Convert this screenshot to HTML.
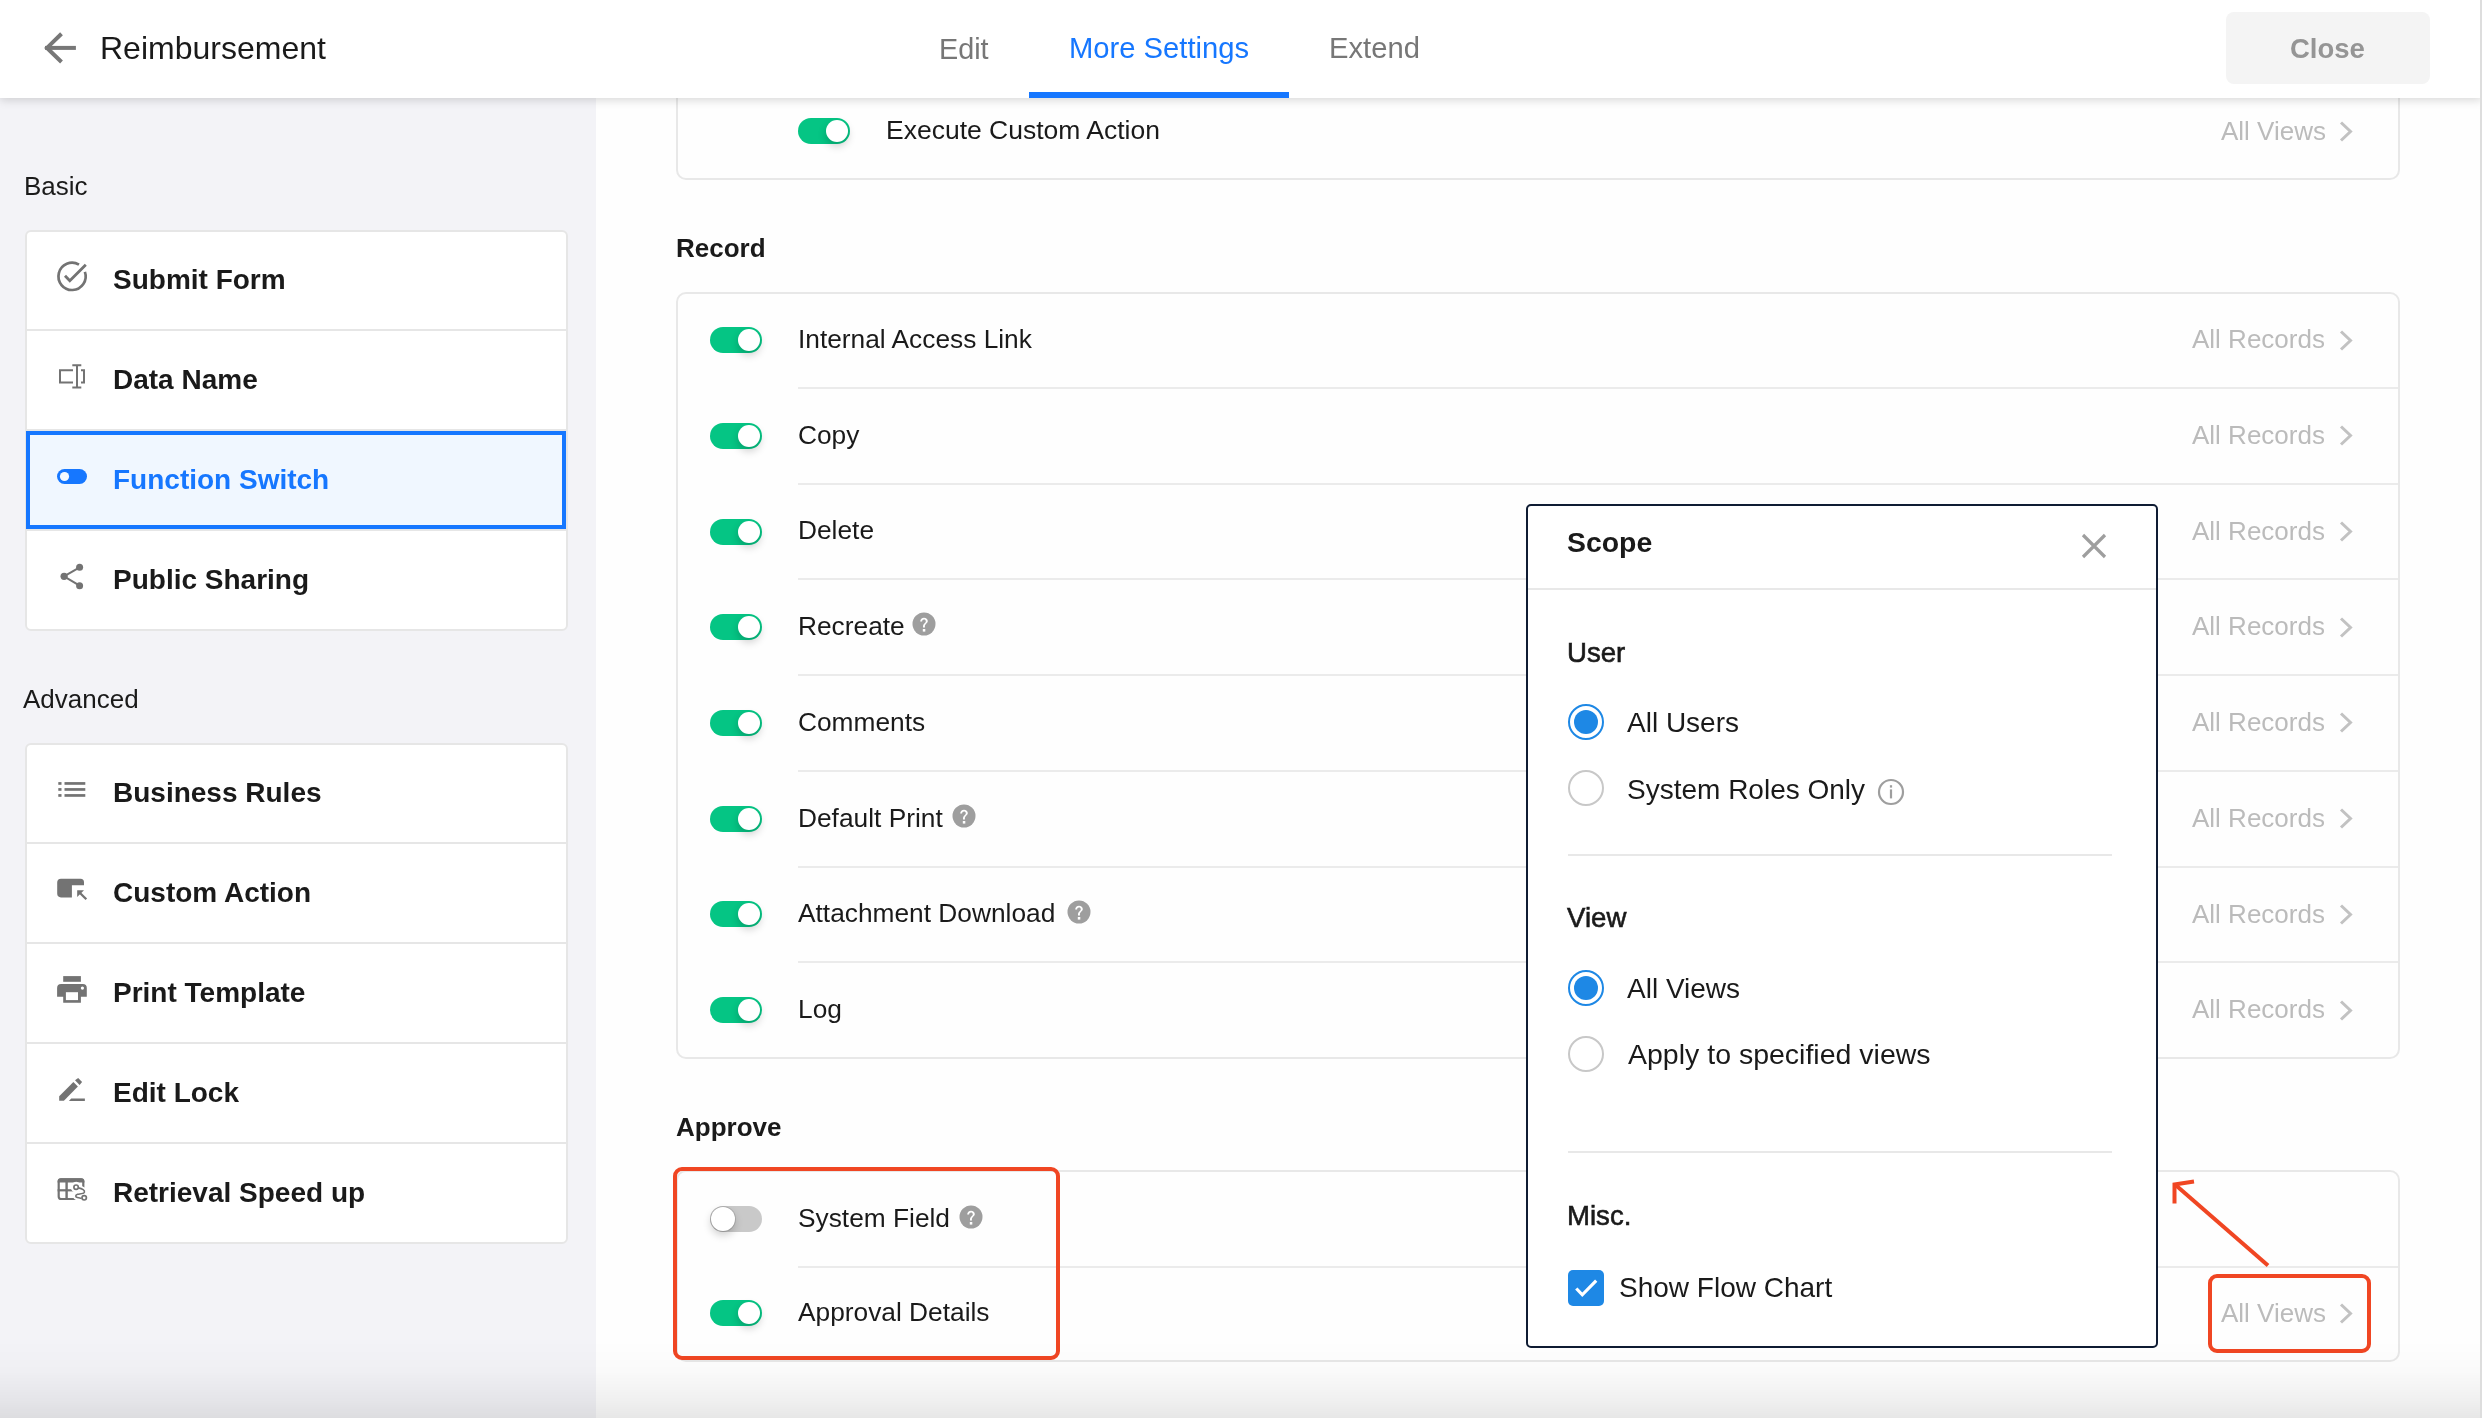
<!DOCTYPE html><html><head><meta charset="utf-8"><title>Reimbursement</title><style>

html,body{margin:0;padding:0;}
body{width:2482px;height:1418px;position:relative;overflow:hidden;background:#fefefe;font-family:"Liberation Sans", sans-serif;}
.a{position:absolute;box-sizing:border-box;}
.t{position:absolute;white-space:nowrap;-webkit-font-smoothing:antialiased;will-change:transform;}
.tog{width:52px;height:26px;border-radius:13px;}
.knob{position:absolute;top:2px;width:22px;height:22px;border-radius:50%;background:#fff;box-shadow:0 4px 9px rgba(0,0,0,0.2);}
.knob.off{top:1px;width:24px;height:24px;box-shadow:0 0 0 1px rgba(0,0,0,0.12),0 4px 9px rgba(0,0,0,0.2);}
.card{background:#fefefe;border:2px solid #e8e8e8;border-radius:10px;}
.sc{background:#fff;border:2px solid #e6e6e6;border-radius:6px;}
.div{background:#ebebeb;height:2px;}

</style></head><body>
<div class="a" style="left:0px;top:98px;width:596px;height:1320px;background:#f3f3f7"></div>
<div class="t" style="left:24.0px;top:172.7px;font-size:26px;line-height:26px;font-weight:400;color:#1a1a1a;">Basic</div>
<div class="a" style="left:25px;top:230px;width:543px;height:400px;"></div>
<div class="a sc" style="left:25px;top:230px;width:543px;height:401px"></div>
<div class="a" style="left:27px;top:329px;width:539px;height:2px;background:#e6e6e6"></div>
<div class="a" style="left:27px;top:429px;width:539px;height:2px;background:#e6e6e6"></div>
<div class="a" style="left:27px;top:529px;width:539px;height:2px;background:#e6e6e6"></div>
<div class="a" style="left:26px;top:431px;width:540px;height:98px;background:#f0f7ff;border:4px solid #1677ff"></div>
<div class="t" style="left:113.0px;top:266.1px;font-size:28px;line-height:28px;font-weight:700;color:#1a1a1a;">Submit Form</div>
<div class="t" style="left:113.0px;top:366.1px;font-size:28px;line-height:28px;font-weight:700;color:#1a1a1a;">Data Name</div>
<div class="t" style="left:113.0px;top:466.1px;font-size:28px;line-height:28px;font-weight:700;color:#1677ff;">Function Switch</div>
<div class="t" style="left:113.0px;top:566.1px;font-size:28px;line-height:28px;font-weight:700;color:#1a1a1a;">Public Sharing</div>
<div class="t" style="left:23.0px;top:685.8px;font-size:26px;line-height:26px;font-weight:400;color:#1a1a1a;">Advanced</div>
<div class="a sc" style="left:25px;top:743px;width:543px;height:501px"></div>
<div class="a" style="left:27px;top:842px;width:539px;height:2px;background:#e6e6e6"></div>
<div class="a" style="left:27px;top:942px;width:539px;height:2px;background:#e6e6e6"></div>
<div class="a" style="left:27px;top:1042px;width:539px;height:2px;background:#e6e6e6"></div>
<div class="a" style="left:27px;top:1142px;width:539px;height:2px;background:#e6e6e6"></div>
<div class="t" style="left:113.0px;top:779.3px;font-size:28px;line-height:28px;font-weight:700;color:#1a1a1a;">Business Rules</div>
<div class="t" style="left:113.0px;top:879.3px;font-size:28px;line-height:28px;font-weight:700;color:#1a1a1a;">Custom Action</div>
<div class="t" style="left:113.0px;top:979.3px;font-size:28px;line-height:28px;font-weight:700;color:#1a1a1a;">Print Template</div>
<div class="t" style="left:113.0px;top:1079.3px;font-size:28px;line-height:28px;font-weight:700;color:#1a1a1a;">Edit Lock</div>
<div class="t" style="left:113.0px;top:1179.3px;font-size:28px;line-height:28px;font-weight:700;color:#1a1a1a;">Retrieval Speed up</div>
<svg class="a" style="left:50px;top:255px;" width="44" height="44" viewBox="0 0 44 44"><path d="M34.9 16.9 A13.6 13.6 0 1 1 29.0 9.7" fill="none" stroke="#737373" stroke-width="2.7"/><polyline points="15,20.8 19.8,25.8 35.8,9.8" fill="none" stroke="#737373" stroke-width="2.8"/></svg>
<svg class="a" style="left:50px;top:355px;" width="44" height="44" viewBox="0 0 44 44"><path d="M23 15.3 H10 V27.6 H23" fill="none" stroke="#737373" stroke-width="2"/><path d="M31 15.3 H34 V27.6 H31" fill="none" stroke="#737373" stroke-width="2"/><path d="M27 10 V33 M22.3 10.3 H31.3 M22.3 32.5 H31.3" fill="none" stroke="#737373" stroke-width="2"/></svg>
<svg class="a" style="left:50px;top:455px;" width="44" height="44" viewBox="0 0 44 44"><rect x="7" y="14" width="30" height="15" rx="7.5" fill="#1677ff"/><circle cx="14.5" cy="21.5" r="4.6" fill="#f4f9ff"/></svg>
<svg class="a" style="left:50px;top:555px;" width="44" height="44" viewBox="0 0 44 44"><line x1="14" y1="21.3" x2="29.6" y2="12.3" stroke="#737373" stroke-width="2"/><line x1="14" y1="21.3" x2="29.6" y2="30.7" stroke="#737373" stroke-width="2"/><circle cx="29.6" cy="12.3" r="3.5" fill="#737373"/><circle cx="14.1" cy="21.3" r="3.6" fill="#737373"/><circle cx="29.6" cy="30.7" r="3.5" fill="#737373"/></svg>
<svg class="a" style="left:50px;top:768px;" width="44" height="44" viewBox="0 0 44 44"><g fill="#737373"><rect x="8.3" y="14.1" width="3.2" height="2.7"/><rect x="8.3" y="20.1" width="3.2" height="2.7"/><rect x="8.3" y="26.1" width="3.2" height="2.7"/><rect x="14.5" y="14.1" width="20.8" height="2.7"/><rect x="14.5" y="20.1" width="20.8" height="2.7"/><rect x="14.5" y="26.1" width="20.8" height="2.7"/></g></svg>
<svg class="a" style="left:50px;top:868px;" width="44" height="44" viewBox="0 0 44 44"><path d="M11 10.8 H30.5 A3.5 3.5 0 0 1 34 14.3 V17.3 H21.9 V29.4 H11 A3.8 3.8 0 0 1 7.2 25.6 V14.6 A3.8 3.8 0 0 1 11 10.8 Z" fill="#737373"/><path d="M27.2 22.2 H34 L27.2 29 Z" fill="#737373"/><line x1="29.5" y1="24.5" x2="36.3" y2="31.3" stroke="#737373" stroke-width="2.3"/></svg>
<svg class="a" style="left:50px;top:968px;" width="44" height="44" viewBox="0 0 44 44"><rect x="13.2" y="8.1" width="17.7" height="5.7" fill="#737373"/><path d="M11.1 15.9 H32.8 A4 4 0 0 1 36.8 19.9 V28.7 H30.9 V34.7 H13.2 V28.7 H7.1 V19.9 A4 4 0 0 1 11.1 15.9 Z" fill="#737373"/><rect x="15.9" y="24.2" width="12.1" height="7.9" fill="#fff"/><circle cx="32.4" cy="20.1" r="1.6" fill="#fff"/></svg>
<svg class="a" style="left:50px;top:1068px;" width="44" height="44" viewBox="0 0 44 44"><path d="M9.2 28.2 L23.4 14.1 L27.9 18.5 L13.9 32.8 H9.2 Z" fill="#737373"/><path d="M25 12.3 L28.2 10 L32.1 14.1 L29.6 17.1 Z" fill="#737373"/><path d="M21.2 30.5 H34.9 V33 H18.9 Z" fill="#737373"/></svg>
<svg class="a" style="left:50px;top:1168px;" width="44" height="44" viewBox="0 0 44 44"><rect x="8.7" y="11.3" width="24.6" height="19.7" rx="2.6" fill="none" stroke="#737373" stroke-width="2.2"/><path d="M10.6 10.2 H31.4 A3 3 0 0 1 34.4 13.2 V14.6 H7.6 V13.2 A3 3 0 0 1 10.6 10.2 Z" fill="#737373"/><rect x="15.4" y="14" width="2.4" height="18" fill="#737373"/><rect x="7.6" y="21.2" width="26.8" height="2.2" fill="#737373"/><path d="M28.3 19.9 C32.5 20.8 35 22.3 34.4 24.3 C33.8 26 29.6 25.8 27.6 26.3 C25.2 27 25.2 28.9 27.4 29.6 C28.6 30 30 30.1 31.6 30.3" fill="none" stroke="#fff" stroke-width="5.5"/><circle cx="26.1" cy="19.2" r="5.4" fill="#fff"/><circle cx="34.2" cy="29.8" r="5" fill="#fff"/><path d="M28.3 19.9 C32.5 20.8 35 22.3 34.4 24.3 C33.8 26 29.6 25.8 27.6 26.3 C25.2 27 25.2 28.9 27.4 29.6 C28.6 30 30 30.1 31.6 30.3" fill="none" stroke="#737373" stroke-width="1.6"/><circle cx="26.1" cy="19.2" r="2.2" fill="none" stroke="#737373" stroke-width="1.7"/><circle cx="34.2" cy="29.8" r="2.2" fill="none" stroke="#737373" stroke-width="1.7"/></svg>
<div class="a card" style="left:676px;top:40px;width:1724px;height:140px"></div>
<div class="a tog" style="left:798px;top:118px;background:#05c584"><div class="knob" style="left:28px"></div></div>
<div class="t" style="left:886.0px;top:117.3px;font-size:26.5px;line-height:26.5px;font-weight:400;color:#1a1a1a;">Execute Custom Action</div>
<div class="t" style="left:2221.0px;top:118.0px;font-size:26px;line-height:26px;font-weight:400;color:#bbbbbb;">All Views</div>
<svg class="a" style="left:2339px;top:120.5px;" width="14" height="21" viewBox="0 0 14 21"><polyline points="2,1.5 11.5,10.5 2,19.5" fill="none" stroke="#c2c2c2" stroke-width="3"/></svg>
<div class="t" style="left:676.0px;top:235.0px;font-size:26px;line-height:26px;font-weight:700;color:#1a1a1a;">Record</div>
<div class="a card" style="left:676px;top:292px;width:1724px;height:767px"></div>
<div class="a tog" style="left:710px;top:327px;background:#05c584"><div class="knob" style="left:28px"></div></div>
<div class="t" style="left:798.0px;top:325.9px;font-size:26.3px;line-height:26.3px;font-weight:400;color:#1a1a1a;">Internal Access Link</div>
<div class="t" style="left:2192.0px;top:326.2px;font-size:26px;line-height:26px;font-weight:400;color:#bbbbbb;">All Records</div>
<svg class="a" style="left:2339px;top:330px;" width="14" height="21" viewBox="0 0 14 21"><polyline points="2,1.5 11.5,10.5 2,19.5" fill="none" stroke="#c2c2c2" stroke-width="3"/></svg>
<div class="a tog" style="left:710px;top:423px;background:#05c584"><div class="knob" style="left:28px"></div></div>
<div class="t" style="left:798.0px;top:421.7px;font-size:26.3px;line-height:26.3px;font-weight:400;color:#1a1a1a;">Copy</div>
<div class="t" style="left:2192.0px;top:421.9px;font-size:26px;line-height:26px;font-weight:400;color:#bbbbbb;">All Records</div>
<svg class="a" style="left:2339px;top:425px;" width="14" height="21" viewBox="0 0 14 21"><polyline points="2,1.5 11.5,10.5 2,19.5" fill="none" stroke="#c2c2c2" stroke-width="3"/></svg>
<div class="a" style="left:798px;top:387px;width:1600px;height:2px;background:#ebebeb"></div>
<div class="a tog" style="left:710px;top:519px;background:#05c584"><div class="knob" style="left:28px"></div></div>
<div class="t" style="left:798.0px;top:517.4px;font-size:26.3px;line-height:26.3px;font-weight:400;color:#1a1a1a;">Delete</div>
<div class="t" style="left:2192.0px;top:517.7px;font-size:26px;line-height:26px;font-weight:400;color:#bbbbbb;">All Records</div>
<svg class="a" style="left:2339px;top:521px;" width="14" height="21" viewBox="0 0 14 21"><polyline points="2,1.5 11.5,10.5 2,19.5" fill="none" stroke="#c2c2c2" stroke-width="3"/></svg>
<div class="a" style="left:798px;top:483px;width:1600px;height:2px;background:#ebebeb"></div>
<div class="a tog" style="left:710px;top:614px;background:#05c584"><div class="knob" style="left:28px"></div></div>
<div class="t" style="left:798.0px;top:613.2px;font-size:26.3px;line-height:26.3px;font-weight:400;color:#1a1a1a;">Recreate</div>
<div class="t" style="left:2192.0px;top:613.4px;font-size:26px;line-height:26px;font-weight:400;color:#bbbbbb;">All Records</div>
<svg class="a" style="left:2339px;top:617px;" width="14" height="21" viewBox="0 0 14 21"><polyline points="2,1.5 11.5,10.5 2,19.5" fill="none" stroke="#c2c2c2" stroke-width="3"/></svg>
<svg class="a" style="left:912px;top:612.25px;" width="24" height="24" viewBox="0 0 24 24"><circle cx="12" cy="12" r="11.5" fill="#9e9e9e"/><path d="M8.2 9.6 C8.2 7.2 10 5.7 12 5.7 C14.1 5.7 15.8 7.1 15.8 9.1 C15.8 11.3 12.9 12 12.9 14.6 L12.9 15.6 L11 15.6 L11 14.4 C11 11.6 13.8 11 13.8 9.2 C13.8 8.2 13 7.5 12 7.5 C10.9 7.5 10.1 8.3 10.1 9.6 Z" fill="#fff"/><rect x="10.8" y="17" width="2.5" height="2.6" fill="#fff"/></svg>
<div class="a" style="left:798px;top:578px;width:1600px;height:2px;background:#ebebeb"></div>
<div class="a tog" style="left:710px;top:710px;background:#05c584"><div class="knob" style="left:28px"></div></div>
<div class="t" style="left:798.0px;top:708.9px;font-size:26.3px;line-height:26.3px;font-weight:400;color:#1a1a1a;">Comments</div>
<div class="t" style="left:2192.0px;top:709.2px;font-size:26px;line-height:26px;font-weight:400;color:#bbbbbb;">All Records</div>
<svg class="a" style="left:2339px;top:712px;" width="14" height="21" viewBox="0 0 14 21"><polyline points="2,1.5 11.5,10.5 2,19.5" fill="none" stroke="#c2c2c2" stroke-width="3"/></svg>
<div class="a" style="left:798px;top:674px;width:1600px;height:2px;background:#ebebeb"></div>
<div class="a tog" style="left:710px;top:806px;background:#05c584"><div class="knob" style="left:28px"></div></div>
<div class="t" style="left:798.0px;top:804.7px;font-size:26.3px;line-height:26.3px;font-weight:400;color:#1a1a1a;">Default Print</div>
<div class="t" style="left:2192.0px;top:804.9px;font-size:26px;line-height:26px;font-weight:400;color:#bbbbbb;">All Records</div>
<svg class="a" style="left:2339px;top:808px;" width="14" height="21" viewBox="0 0 14 21"><polyline points="2,1.5 11.5,10.5 2,19.5" fill="none" stroke="#c2c2c2" stroke-width="3"/></svg>
<svg class="a" style="left:951.5px;top:803.75px;" width="24" height="24" viewBox="0 0 24 24"><circle cx="12" cy="12" r="11.5" fill="#9e9e9e"/><path d="M8.2 9.6 C8.2 7.2 10 5.7 12 5.7 C14.1 5.7 15.8 7.1 15.8 9.1 C15.8 11.3 12.9 12 12.9 14.6 L12.9 15.6 L11 15.6 L11 14.4 C11 11.6 13.8 11 13.8 9.2 C13.8 8.2 13 7.5 12 7.5 C10.9 7.5 10.1 8.3 10.1 9.6 Z" fill="#fff"/><rect x="10.8" y="17" width="2.5" height="2.6" fill="#fff"/></svg>
<div class="a" style="left:798px;top:770px;width:1600px;height:2px;background:#ebebeb"></div>
<div class="a tog" style="left:710px;top:901px;background:#05c584"><div class="knob" style="left:28px"></div></div>
<div class="t" style="left:798.0px;top:900.4px;font-size:26.3px;line-height:26.3px;font-weight:400;color:#1a1a1a;">Attachment Download</div>
<div class="t" style="left:2192.0px;top:900.7px;font-size:26px;line-height:26px;font-weight:400;color:#bbbbbb;">All Records</div>
<svg class="a" style="left:2339px;top:904px;" width="14" height="21" viewBox="0 0 14 21"><polyline points="2,1.5 11.5,10.5 2,19.5" fill="none" stroke="#c2c2c2" stroke-width="3"/></svg>
<svg class="a" style="left:1066.9px;top:899.5px;" width="24" height="24" viewBox="0 0 24 24"><circle cx="12" cy="12" r="11.5" fill="#9e9e9e"/><path d="M8.2 9.6 C8.2 7.2 10 5.7 12 5.7 C14.1 5.7 15.8 7.1 15.8 9.1 C15.8 11.3 12.9 12 12.9 14.6 L12.9 15.6 L11 15.6 L11 14.4 C11 11.6 13.8 11 13.8 9.2 C13.8 8.2 13 7.5 12 7.5 C10.9 7.5 10.1 8.3 10.1 9.6 Z" fill="#fff"/><rect x="10.8" y="17" width="2.5" height="2.6" fill="#fff"/></svg>
<div class="a" style="left:798px;top:866px;width:1600px;height:2px;background:#ebebeb"></div>
<div class="a tog" style="left:710px;top:997px;background:#05c584"><div class="knob" style="left:28px"></div></div>
<div class="t" style="left:798.0px;top:996.2px;font-size:26.3px;line-height:26.3px;font-weight:400;color:#1a1a1a;">Log</div>
<div class="t" style="left:2192.0px;top:996.4px;font-size:26px;line-height:26px;font-weight:400;color:#bbbbbb;">All Records</div>
<svg class="a" style="left:2339px;top:1000px;" width="14" height="21" viewBox="0 0 14 21"><polyline points="2,1.5 11.5,10.5 2,19.5" fill="none" stroke="#c2c2c2" stroke-width="3"/></svg>
<div class="a" style="left:798px;top:961px;width:1600px;height:2px;background:#ebebeb"></div>
<div class="t" style="left:676.0px;top:1114.0px;font-size:26px;line-height:26px;font-weight:700;color:#1a1a1a;">Approve</div>
<div class="a card" style="left:676px;top:1170px;width:1724px;height:192px"></div>
<div class="a tog" style="left:710px;top:1206px;background:#c9c9c9"><div class="knob off" style="left:1px"></div></div>
<div class="t" style="left:798.0px;top:1204.9px;font-size:26.3px;line-height:26.3px;font-weight:400;color:#1a1a1a;">System Field</div>
<svg class="a" style="left:958.5px;top:1205px;" width="24" height="24" viewBox="0 0 24 24"><circle cx="12" cy="12" r="11.5" fill="#9e9e9e"/><path d="M8.2 9.6 C8.2 7.2 10 5.7 12 5.7 C14.1 5.7 15.8 7.1 15.8 9.1 C15.8 11.3 12.9 12 12.9 14.6 L12.9 15.6 L11 15.6 L11 14.4 C11 11.6 13.8 11 13.8 9.2 C13.8 8.2 13 7.5 12 7.5 C10.9 7.5 10.1 8.3 10.1 9.6 Z" fill="#fff"/><rect x="10.8" y="17" width="2.5" height="2.6" fill="#fff"/></svg>
<div class="a" style="left:798px;top:1266px;width:1600px;height:2px;background:#ebebeb"></div>
<div class="a tog" style="left:710px;top:1300px;background:#05c584"><div class="knob" style="left:28px"></div></div>
<div class="t" style="left:798.0px;top:1299.2px;font-size:26.3px;line-height:26.3px;font-weight:400;color:#1a1a1a;">Approval Details</div>
<div class="t" style="left:2221.0px;top:1299.7px;font-size:26px;line-height:26px;font-weight:400;color:#bbbbbb;">All Views</div>
<svg class="a" style="left:2339px;top:1302.5px;" width="14" height="21" viewBox="0 0 14 21"><polyline points="2,1.5 11.5,10.5 2,19.5" fill="none" stroke="#c2c2c2" stroke-width="3"/></svg>
<div class="a" style="left:673px;top:1167px;width:387px;height:193px;border:4px solid #f04623;border-radius:9px"></div>
<div class="a" style="left:2208px;top:1274px;width:163px;height:79px;border:4px solid #f04623;border-radius:9px"></div>
<svg class="a" style="left:2160px;top:1170px;" width="120" height="110" viewBox="0 0 120 110"><line x1="108" y1="95.5" x2="15" y2="14.5" stroke="#f04623" stroke-width="4"/><polyline points="34,11.5 14.5,14.5 14.5,33.5" fill="none" stroke="#f04623" stroke-width="4"/></svg>
<div class="a" style="left:1526px;top:504px;width:632px;height:844px;background:#fff;border:2px solid #0f1c33;border-radius:5px"></div>
<div class="t" style="left:1567.3px;top:528.0px;font-size:28.4px;line-height:28.4px;font-weight:700;color:#1a1a1a;">Scope</div>
<svg class="a" style="left:2080px;top:532px;" width="28" height="28" viewBox="0 0 28 28"><path d="M3 3 L25 25 M25 3 L3 25" stroke="#9e9e9e" stroke-width="3.2"/></svg>
<div class="a" style="left:1528px;top:588px;width:628px;height:2px;background:#e8e8e8"></div>
<div class="t" style="left:1567.0px;top:638.6px;font-size:27.6px;line-height:27.6px;font-weight:400;color:#1a1a1a;-webkit-text-stroke:0.6px #1a1a1a">User</div>
<div class="a" style="left:1568px;top:704px;width:36px;height:36px;border-radius:50%;border:2px solid #1e88e5;background:#fff"><div class="a" style="left:4px;top:4px;width:24px;height:24px;border-radius:50%;background:#1e88e5"></div></div>
<div class="t" style="left:1627.0px;top:709.1px;font-size:28px;line-height:28px;font-weight:400;color:#1a1a1a;">All Users</div>
<div class="a" style="left:1568px;top:770px;width:36px;height:36px;border-radius:50%;border:2px solid #c8c8c8;background:#fff"></div>
<div class="t" style="left:1627.0px;top:776.3px;font-size:28px;line-height:28px;font-weight:400;color:#1a1a1a;">System Roles Only</div>
<svg class="a" style="left:1877px;top:778px;" width="28" height="28" viewBox="0 0 28 28"><circle cx="14" cy="14" r="12" fill="none" stroke="#9e9e9e" stroke-width="2.2"/><rect x="12.9" y="7.2" width="2.2" height="2.4" fill="#9e9e9e"/><rect x="12.9" y="11.4" width="2.2" height="9" fill="#9e9e9e"/></svg>
<div class="a" style="left:1568px;top:854px;width:544px;height:2px;background:#e8e8e8"></div>
<div class="t" style="left:1567.0px;top:904.1px;font-size:27.6px;line-height:27.6px;font-weight:400;color:#1a1a1a;-webkit-text-stroke:0.6px #1a1a1a">View</div>
<div class="a" style="left:1568px;top:970px;width:36px;height:36px;border-radius:50%;border:2px solid #1e88e5;background:#fff"><div class="a" style="left:4px;top:4px;width:24px;height:24px;border-radius:50%;background:#1e88e5"></div></div>
<div class="t" style="left:1627.0px;top:975.2px;font-size:28px;line-height:28px;font-weight:400;color:#1a1a1a;">All Views</div>
<div class="a" style="left:1568px;top:1036px;width:36px;height:36px;border-radius:50%;border:2px solid #c8c8c8;background:#fff"></div>
<div class="t" style="left:1627.5px;top:1040.4px;font-size:28.5px;line-height:28.5px;font-weight:400;color:#1a1a1a;">Apply to specified views</div>
<div class="a" style="left:1568px;top:1151px;width:544px;height:2px;background:#e8e8e8"></div>
<div class="t" style="left:1567.0px;top:1202.4px;font-size:27.6px;line-height:27.6px;font-weight:400;color:#1a1a1a;-webkit-text-stroke:0.6px #1a1a1a">Misc.</div>
<div class="a" style="left:1568px;top:1270px;width:36px;height:36px;border-radius:5px;background:#1e88e5"></div>
<svg class="a" style="left:1568px;top:1270px;" width="36" height="36" viewBox="0 0 36 36"><polyline points="8.3,18.5 14.3,24.8 28.2,10.6" fill="none" stroke="#fff" stroke-width="3.2"/></svg>
<div class="t" style="left:1619.0px;top:1274.3px;font-size:28px;line-height:28px;font-weight:400;color:#1a1a1a;">Show Flow Chart</div>
<div class="a" style="left:0px;top:1340px;width:2482px;height:78px;background:linear-gradient(to bottom,rgba(0,0,0,0) 0%,rgba(0,0,0,0.015) 40%,rgba(0,0,0,0.06) 80%,rgba(0,0,0,0.09) 100%);pointer-events:none"></div>
<div class="a" style="left:0px;top:0px;width:2482px;height:98px;background:#fff;box-shadow:0 2px 9px rgba(0,0,0,0.16)"></div>
<svg class="a" style="left:38px;top:26px;" width="44" height="44" viewBox="0 0 44 44"><polyline points="23.5,7.8 9,21.9 23.5,36" fill="none" stroke="#777" stroke-width="4"/><line x1="7" y1="21.9" x2="37.9" y2="21.9" stroke="#777" stroke-width="4"/></svg>
<div class="t" style="left:100.0px;top:31.6px;font-size:32px;line-height:32px;font-weight:400;color:#1a1a1a;">Reimbursement</div>
<div class="t" style="left:938.5px;top:34.6px;font-size:28.8px;line-height:28.8px;font-weight:400;color:#777777;">Edit</div>
<div class="t" style="left:1069.0px;top:33.6px;font-size:29.2px;line-height:29.2px;font-weight:400;color:#1677ff;">More Settings</div>
<div class="t" style="left:1328.5px;top:33.6px;font-size:29.2px;line-height:29.2px;font-weight:400;color:#777777;">Extend</div>
<div class="a" style="left:1029px;top:92px;width:260px;height:6px;background:#1677ff"></div>
<div class="a" style="left:2226px;top:12px;width:204px;height:72px;background:#f4f4f4;border-radius:8px"></div>
<div class="t" style="left:2290.0px;top:34.8px;font-size:27.5px;line-height:27.5px;font-weight:700;color:#959595;">Close</div>
<div class="a" style="left:2480px;top:0px;width:2px;height:1418px;background:#dddddd"></div>
</body></html>
